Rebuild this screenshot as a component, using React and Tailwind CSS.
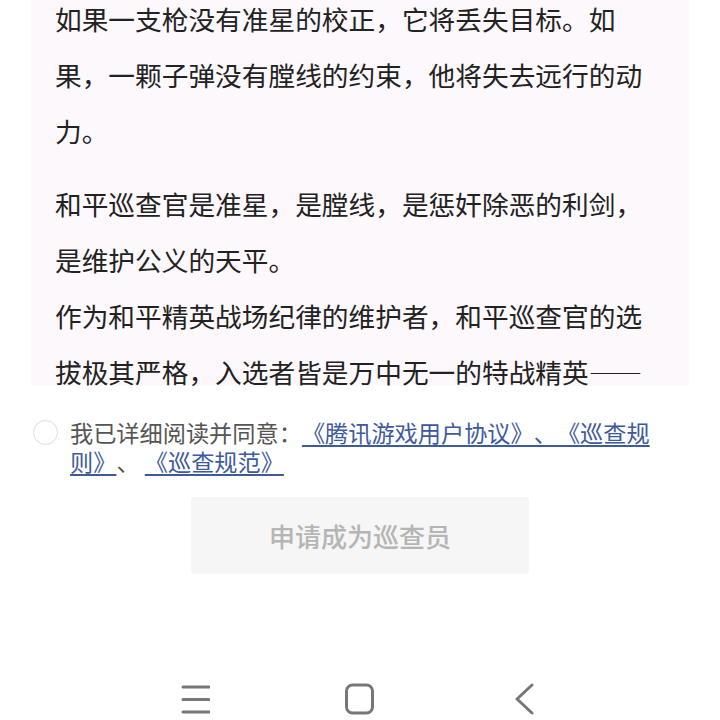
import { useState } from 'react';

const body = [
  '如果一支枪没有准星的校正，它将丢失目标。如果，一颗子弹没有膛线的约束，他将失去远行的动力。',
  '和平巡查官是准星，是膛线，是惩奸除恶的利剑，是维护公义的天平。',
  '作为和平精英战场纪律的维护者，和平巡查官的选拔极其严格，入选者皆是万中无一的特战精英——',
];

const linkCls =
  'text-[#3d5a9e] underline decoration-2 underline-offset-[3px] decoration-[#3d5a9e]';

const NavMenu = () => (
  <svg width="30" height="30" viewBox="0 0 30 30" fill="none" stroke="#777" strokeWidth="3" strokeLinecap="round">
    <path d="M3 3h26M3 15.5h26M3 28h26" />
  </svg>
);

const NavHome = () => (
  <svg width="32" height="32" viewBox="0 0 32 32" fill="none" stroke="#777" strokeWidth="3">
    <rect x="2.5" y="2" width="26" height="28" rx="6" />
  </svg>
);

const NavBack = () => (
  <svg width="22" height="32" viewBox="0 0 22 32" fill="none" stroke="#777" strokeWidth="3" strokeLinecap="round" strokeLinejoin="round">
    <path d="M18 2 3 16l15 14" />
  </svg>
);

const App = () => {
  const [agreed, setAgreed] = useState(false);

  return (
    <div
      lang="zh-CN"
      className="w-[720px] h-[720px] bg-white overflow-hidden flex flex-col [text-spacing-trim:space-all] font-['Noto_Sans_CJK_SC','Noto_Sans',sans-serif]"
    >
      {/* rules text, scrolled */}
      <div className="mx-[31px] h-[386px] overflow-hidden bg-[#fcf8fc] pl-6">
        <div className="w-[600px] -mt-[9px] text-[26.7px] leading-[56px] text-[#222]">
          <p>{body[0]}</p>
          <p className="mt-[17px]">{body[1]}</p>
          <p>{body[2]}</p>
        </div>
      </div>

      {/* agreement */}
      <div className="mt-[32px] flex items-start pl-[33px]">
        <button
          onClick={() => setAgreed(!agreed)}
          className={`mt-[2px] w-[25px] h-[25px] shrink-0 rounded-full border ${
            agreed ? 'border-[#3d5a9e] bg-[#3d5a9e]' : 'border-[#dcdcdc] bg-white'
          }`}
        />
        <p className="ml-[12px] w-[595px] text-[23.2px] leading-[29px] text-[#555]">
          我已详细阅读并同意：
          <span className={linkCls}>《腾讯游戏用户协议》、《巡查规则》</span>
          、 <span className={linkCls}>《巡查规范》</span>
        </p>
      </div>

      {/* submit */}
      <div className="mt-[21px] flex justify-center">
        <button className="w-[338px] h-[77px] rounded-[3px] bg-[#f6f6f6] text-[26px] font-medium text-[#b5b5b5]">
          申请成为巡查员
        </button>
      </div>

      {/* system nav bar */}
      <div className="mt-auto mb-[7px] grid grid-cols-[165px_165px_165px] justify-center items-center h-[30px]">
        <div className="flex justify-center"><NavMenu /></div>
        <div className="flex justify-center"><NavHome /></div>
        <div className="flex justify-center"><NavBack /></div>
      </div>
    </div>
  );
};

export default App;
